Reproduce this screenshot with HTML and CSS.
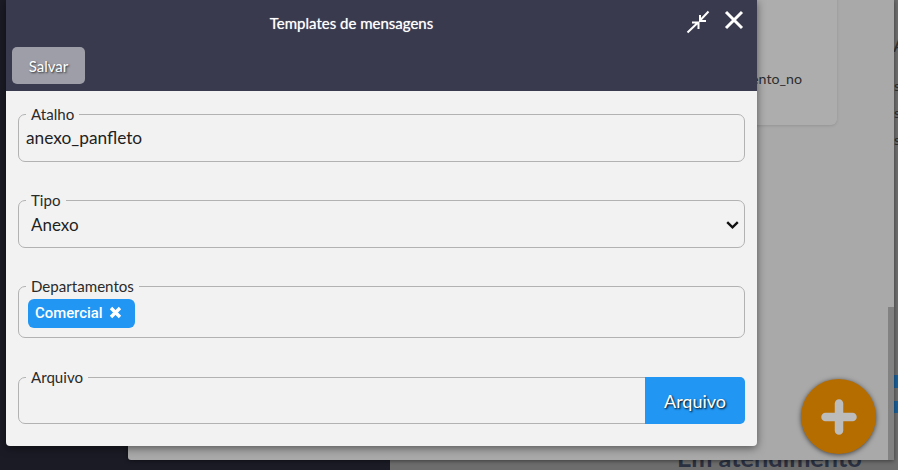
FILE: index.html
```html
<!DOCTYPE html>
<html lang="pt-BR">
<head>
<meta charset="utf-8">
<title>Templates de mensagens</title>
<link rel="stylesheet" href="styles.css">
</head>
<body>
<div class="backdrop-right">
  <h2 class="status-title">Em atendimento</h2>
  <span class="strip-a">A</span>
  <span class="strip-s s1">s</span>
  <span class="strip-s s2">s</span>
  <span class="strip-s s3">s</span>
  <span class="strip-blue b1"></span>
  <span class="strip-blue b2"></span>
</div>
<div class="panel">
  <div class="card"><span class="card-text">atendimento_no</span></div>
  <div class="scrollbar"></div>
  <button class="fab" aria-label="Adicionar">
    <svg width="36" height="36" viewBox="0 0 36 36"><path d="M18 4.5v27M4.5 18h27" stroke="#bcbcbc" stroke-width="8.5" stroke-linecap="round" fill="none"/></svg>
  </button>
</div>
<section class="modal">
  <header class="modal-header">
    <div class="title-row">
      <h1 class="title">Templates de mensagens</h1>
      <div class="actions">
        <svg class="icon-compress" width="24" height="24" viewBox="0 0 24 24" fill="none" stroke="#fff" stroke-width="2"><path d="M1.5 22.5L12 12.5M6 12.5H12.5V19"/><path d="M22.5 1.5L14 10.5M14 5V11H20"/></svg>
        <svg class="icon-close" width="20" height="20" viewBox="0 0 20 20" fill="none" stroke="#fff" stroke-width="3"><path d="M2 2L18 18M18 2L2 18"/></svg>
      </div>
    </div>
    <button class="save">Salvar</button>
  </header>
  <form class="modal-body">
    <fieldset class="field field-atalho">
      <legend>Atalho</legend>
      <input class="text-input" type="text" value="anexo_panfleto">
    </fieldset>
    <fieldset class="field field-tipo">
      <legend>Tipo</legend>
      <select class="select-input"><option>Anexo</option></select>
      <svg class="chevron" width="13" height="8" viewBox="0 0 13 8" fill="none" stroke="#111" stroke-width="2.4"><path d="M1.2 1.2L6.5 6.3L11.8 1.2"/></svg>
    </fieldset>
    <fieldset class="field field-dept">
      <legend>Departamentos</legend>
      <span class="tag">Comercial
        <svg width="13" height="13" viewBox="0 0 13 13" fill="none" stroke="#fff" stroke-width="3.4"><path d="M2 2L11 11M11 2L2 11"/></svg>
      </span>
    </fieldset>
    <fieldset class="field field-file">
      <legend>Arquivo</legend>
      <button type="button" class="file-btn">Arquivo</button>
    </fieldset>
  </form>
</section>
</body>
</html>
```
FILE: styles.css
```css
* { box-sizing: border-box; }
html, body { margin: 0; height: 100%; overflow: hidden; }
body { background: #1b1b26; font-family: "Lato", sans-serif; position: relative; width: 898px; height: 470px; }

.backdrop-right { position: absolute; left: 390px; top: 0; right: 0; bottom: 0; background: #6d6d6d; overflow: hidden; }
.status-title { position: absolute; left: 287px; top: 442px; margin: 0; font: 700 25.3px "Lato", sans-serif; color: #2c3242; white-space: nowrap; }
.strip-a { position: absolute; left: 503px; top: 32px; font-size: 20px; color: #333; }
.strip-s { position: absolute; left: 504px; font-size: 14px; color: #2f2f2f; }
.s1 { top: 77px; } .s2 { top: 104px; } .s3 { top: 131px; }
.strip-blue { position: absolute; left: 504px; width: 4px; background: #1a5f99; }
.b1 { top: 375px; height: 13px; } .b2 { top: 401px; height: 12px; }

.panel { position: absolute; left: 128px; top: 0; width: 766px; height: 460px; background: #a9a9a9; border-radius: 0 0 0 3px; box-shadow: 0 1px 4px rgba(0,0,0,.45); }
.card { position: absolute; left: 500px; top: -10px; width: 209px; height: 135px; background: #adadad; border-radius: 6px; box-shadow: 0 1px 3px rgba(0,0,0,.12); }
.card-text { position: absolute; right: 35px; top: 80px; font-size: 14.2px; color: #2e2e2e; white-space: nowrap; }
.scrollbar { position: absolute; right: 0; top: 307px; width: 6px; bottom: 0; background: #828282; }
.fab { position: absolute; left: 673px; top: 379px; width: 75px; height: 75px; padding: 0; border: 0; border-radius: 50%; background: #b66d00; box-shadow: 0 1px 5px rgba(0,0,0,.6); display: flex; align-items: center; justify-content: center; }

.modal { position: absolute; left: 6px; top: 0; width: 751px; height: 446px; background: #f2f2f2; border-radius: 0 0 4px 4px; box-shadow: 0 2px 8px rgba(0,0,0,.5); display: flex; flex-direction: column; overflow: hidden; }
.modal-header { height: 91px; background: #3a3a4f; flex: none; padding-left: 6px; }
.title-row { height: 47px; padding-right: 66px; display: flex; justify-content: center; align-items: flex-start; position: relative; }
.title { margin: 14px 0 0; font-size: 15px; font-weight: 400; line-height: 18px; color: #fff; text-shadow: 0 0 1px rgba(255,255,255,.7); }
.actions { position: absolute; right: 13px; top: 10px; display: flex; align-items: flex-start; gap: 14px; }
.save { display: block; width: 73px; height: 37px; padding: 0; border: 0; border-radius: 5px; background: #9e9ea8; color: #fff; font: 400 15px "Lato", sans-serif; text-shadow: 1px 1px 2px rgba(0,0,0,.7); }

.modal-body { padding: 0 12px; display: flex; flex-direction: column; }
.field { margin: 0; min-width: 0; border: 1px solid #b2b2b2; border-radius: 7px; padding: 0 7px; position: relative; }
.field legend { padding: 0 5px; font-size: 15.1px; line-height: 18px; color: #2a2a2a; }
.field-atalho { margin-top: 14px; height: 57px; }
.field-tipo { margin-top: 29px; height: 57px; }
.field-dept { margin-top: 29px; height: 61px; }
.field-file { margin-top: 30px; height: 56px; }
.text-input { display: block; width: 100%; height: 28px; margin: 0; padding: 0; border: 0; outline: 0; background: transparent; font: 400 17.3px "Lato", sans-serif; color: #1f1f1f; }
.select-input { display: block; width: 100%; height: 30px; margin: 0; padding: 0 0 0 5px; border: 0; outline: 0; background: transparent; appearance: none; font: 400 17px "Lato", sans-serif; color: #1f1f1f; }
.chevron { position: absolute; right: 5.5px; top: 12px; }
.tag { display: inline-flex; align-items: center; gap: 6px; height: 29px; margin: 4px 0 0 2px; padding: 0 13px 2px 7px; border-radius: 6px; background: #2196f3; color: #fff; font: 500 14.9px "Roboto", sans-serif; }
.file-btn { position: absolute; right: -1px; top: -9px; width: 100px; height: 47px; padding: 0; border: 0; border-radius: 0 5px 5px 0; background: #2196f3; color: #fff; font: 400 18px "Lato", sans-serif; text-shadow: 1px 1px 2px #000; }
```
